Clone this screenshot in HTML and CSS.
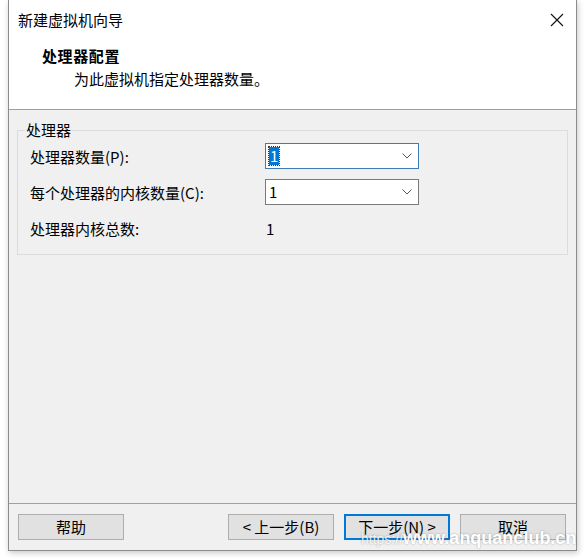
FILE: index.html
```html
<!DOCTYPE html>
<html lang="zh-CN">
<head>
<meta charset="utf-8">
<title>新建虚拟机向导</title>
<link rel="stylesheet" href="styles.css">
</head>
<body>
<div class="window">
  <div class="titlebar">
    <span class="title">新建虚拟机向导</span>
    <span class="close">
      <svg width="14" height="14" viewBox="0 0 14 14"><path d="M1 1 L13 13 M13 1 L1 13" stroke="#111" stroke-width="1.1" fill="none"/></svg>
    </span>
  </div>
  <div class="header">
    <div class="h-title">处理器配置</div>
    <div class="h-sub">为此虚拟机指定处理器数量。</div>
  </div>
  <div class="content">
    <fieldset class="group">
      <legend class="legend">处理器</legend>
      <div class="grid">
        <div class="label">处理器数量(P):</div>
        <div class="combo focused">
          <span class="value sel">1</span>
          <svg class="chev" width="10" height="6" viewBox="0 0 10 6"><path d="M0.5 0.5 L5 5 L9.5 0.5" stroke="#555" stroke-width="1" fill="none"/></svg>
        </div>
        <div class="label">每个处理器的内核数量(C):</div>
        <div class="combo">
          <span class="value">1</span>
          <svg class="chev" width="10" height="6" viewBox="0 0 10 6"><path d="M0.5 0.5 L5 5 L9.5 0.5" stroke="#555" stroke-width="1" fill="none"/></svg>
        </div>
        <div class="label">处理器内核总数:</div>
        <div class="total">1</div>
      </div>
    </fieldset>
    <div class="spacer"></div>
    <div class="footer">
      <button class="btn">帮助</button>
      <div class="grow"></div>
      <button class="btn">&lt; 上一步(B)</button>
      <button class="btn default">下一步(N) &gt;</button>
      <button class="btn">取消</button>
    </div>
  </div>
  <div class="watermark"><span class="wm-pre">https://</span>www.anquanclub.cn</div>
</div>
</body>
</html>
```

FILE: styles.css
```css
html, body {
  margin: 0;
  padding: 0;
  background: #ffffff;
}
body {
  width: 586px;
  height: 559px;
  overflow: hidden;
  font-family: "Noto Sans CJK SC", "Noto Sans", sans-serif;
  font-size: 15px;
  color: #000;
}
.window {
  position: relative;
  margin-left: 8px;
  width: 569px;
  height: 551px;
  box-sizing: border-box;
  border: 1px solid #8c8c8c;
  border-top: none;
  background: #f0f0f0;
  display: flex;
  flex-direction: column;
  box-shadow: 1px 2px 6px rgba(0,0,0,0.22);
}
.titlebar {
  height: 40px;
  background: #fff;
  display: flex;
  align-items: center;
  padding-left: 9px;
}
.title {
  flex: 1;
  line-height: 20px;
}
.close {
  width: 14px;
  height: 14px;
  margin-right: 12px;
  display: flex;
}
.header {
  height: 70px;
  background: #fff;
  border-bottom: 1px solid #a0a0a0;
  padding-left: 33px;
  padding-top: 6px;
  box-sizing: border-box;
}
.h-title {
  font-weight: bold;
  line-height: 20px;
  letter-spacing: 0.6px;
}
.h-sub {
  margin-top: 3px;
  margin-left: 32px;
  line-height: 20px;
}
.content {
  flex: 1;
  display: flex;
  flex-direction: column;
}
.group {
  margin: 10px 0 0 8px;
  width: 551px;
  box-sizing: border-box;
  border: 1px solid #dcdcdc;
  padding: 3px 7px 13px 7px;
  min-inline-size: 0;
}
.legend {
  padding: 0 1px;
  line-height: 20px;
}
.grid {
  display: grid;
  grid-template-columns: 235px 154px;
  grid-template-rows: 26px 26px 26px;
  row-gap: 10px;
  padding-left: 5px;
  align-items: center;
}
.label {
  line-height: 20px;
  padding-top: 2px;
}
.combo {
  height: 26px;
  box-sizing: border-box;
  background: #fff;
  border: 1px solid #7a7a7a;
  display: flex;
  align-items: center;
  padding-left: 3px;
  padding-right: 6px;
}
.combo.focused {
  border-color: #3d7bb5;
}
.value {
  flex: 1;
  line-height: 18px;
}
.value.sel {
  flex: none;
  background: #0078d7;
  color: #fff;
  padding: 0 1px;
  outline: 1px dotted #333;
}
.combo.focused .chev {
  margin-left: auto;
}
.total {
  padding-left: 1px;
  line-height: 20px;
  padding-top: 2px;
}
.spacer {
  flex: 1;
}
.footer {
  border-top: 1px solid #a0a0a0;
  padding: 10px 10px 10px 9px;
  display: flex;
  gap: 10px;
}
.grow {
  flex: 1;
}
.btn {
  width: 106px;
  height: 26px;
  box-sizing: border-box;
  background: #e1e1e1;
  border: 1px solid #adadad;
  font-family: "Noto Sans CJK SC", "Noto Sans", sans-serif;
  font-size: 15px;
  line-height: 16px;
  color: #000;
  padding: 0;
  margin: 0;
}
.btn.default {
  border: 2px solid #0078d7;
}
.watermark {
  position: absolute;
  left: 352px;
  top: 531px;
  font-family: "Liberation Sans", Arial, sans-serif;
  font-weight: bold;
  font-size: 18px;
  line-height: 14px;
  color: #fff;
  text-shadow: 0 0 2px rgba(0,0,0,0.35);
  white-space: nowrap;
}
.wm-pre {
  font-weight: normal;
  font-size: 14px;
  color: rgba(255,255,255,0.85);
}
```
